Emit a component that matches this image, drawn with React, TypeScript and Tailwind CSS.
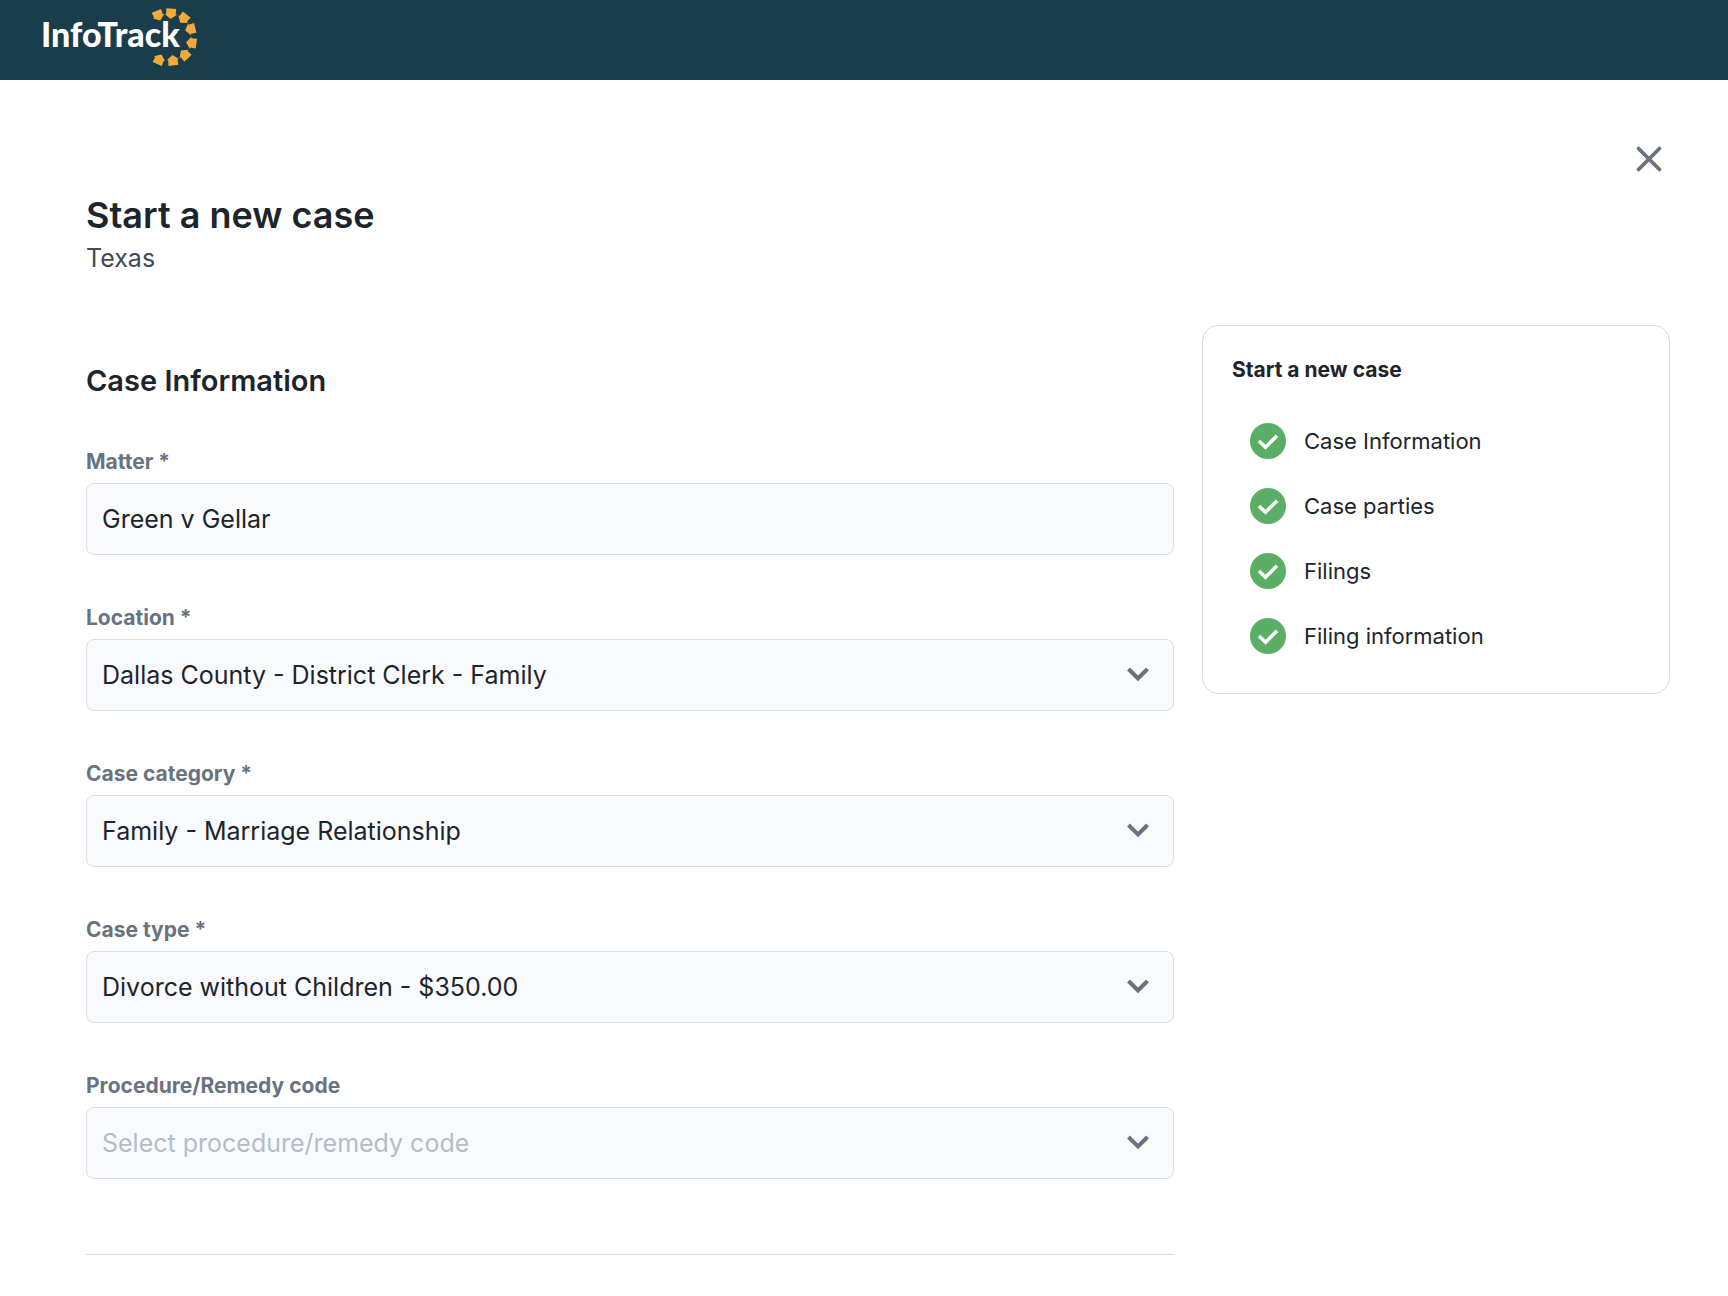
import React from 'react';

interface SelectFieldProps {
  id: string;
  label: string;
  value?: string;
  placeholder?: string;
}

const controlClass =
  'block h-[72px] w-full appearance-none rounded-lg border border-[#d9dde4] bg-[#f9fafc] px-[15px] text-[25px]';

// Position and rotation of each arrow in the logo ring
const ringArrows = [
  { x: 158, y: 15, angle: -22 },
  { x: 171, y: 13, angle: 4 },
  { x: 184, y: 18, angle: 38 },
  { x: 191, y: 29, angle: 76 },
  { x: 192, y: 43, angle: 98 },
  { x: 185, y: 55, angle: 137 },
  { x: 173, y: 61, angle: 174 },
  { x: 159, y: 60, angle: 204 },
];

const Logo: React.FC = () => (
  <svg width="200" height="80" viewBox="0 0 200 80" role="img" aria-label="InfoTrack">
    {ringArrows.map((arrow) => (
      <path
        key={arrow.x}
        d="M-5 -4.4 L5 -4.4 L4.7 1.2 L6.2 1.4 L0 6 L-6.2 1.4 L-4.7 1.2 Z"
        fill="#f2a93b"
        transform={`translate(${arrow.x} ${arrow.y}) rotate(${arrow.angle})`}
      />
    ))}
    <text x="41" y="47" fill="#fff" className="font-['Lato'] text-[34px] font-black">
      InfoTrack
    </text>
  </svg>
);

const FieldLabel: React.FC<{ htmlFor: string; children: React.ReactNode }> = ({ htmlFor, children }) => (
  <label htmlFor={htmlFor} className="mb-[7px] block text-[21px] leading-7 font-bold text-[#68737f]">
    {children}
  </label>
);

const SelectField: React.FC<SelectFieldProps> = ({ id, label, value, placeholder }) => (
  <div>
    <FieldLabel htmlFor={id}>{label}</FieldLabel>
    <div className="relative">
      <select id={id} className={`${controlClass} pt-0.5 ${value ? 'text-[#1d242c]' : 'text-[#b4bdc7]'}`}>
        <option>{value || placeholder}</option>
      </select>
      <svg
        className="pointer-events-none absolute top-[27px] right-6 h-4 w-6"
        viewBox="0 0 24 16"
        fill="none"
        stroke="#68737f"
        strokeWidth="4"
      >
        <path d="M2.5 3 12 12.5 21.5 3" />
      </svg>
    </div>
  </div>
);

const CheckBadge: React.FC = () => (
  <svg className="size-9 shrink-0" viewBox="0 0 36 36" fill="none">
    <circle cx="18" cy="18" r="18" fill="#5aae66" />
    <path d="M9 18 15.5 24.2 27 12.8" stroke="#fff" strokeWidth="3.6" />
  </svg>
);

const steps = ['Case Information', 'Case parties', 'Filings', 'Filing information'];

const App: React.FC = () => {
  return (
    <div className="min-h-screen bg-white font-['Inter',sans-serif] text-[#1d242c]">
      <header className="h-20 bg-[#193d4b]">
        <Logo />
      </header>

      <main className="pr-[58px] pl-[86px]">
        <div className="flex justify-end pt-[58px]">
          <button type="button" aria-label="Close" className="flex size-[42px] items-center justify-center">
            <svg
              className="size-7"
              viewBox="0 0 28 28"
              fill="none"
              stroke="#68737f"
              strokeWidth="3.8"
              strokeLinecap="round"
            >
              <path d="M3.5 3.5 24.5 24.5 M24.5 3.5 3.5 24.5" />
            </svg>
          </button>
        </div>

        <h1 className="mt-3 text-[36px] leading-[46px] font-semibold">Start a new case</h1>
        <p className="text-[25px] leading-10 text-[#414a55]">Texas</p>

        <div className="mt-[47px] flex items-start gap-7">
          <form className="min-w-0 flex-1">
            <h2 className="mt-9 mb-[47px] text-[29px] leading-10 font-semibold">Case Information</h2>

            <div className="flex flex-col gap-[49px]">
              <div>
                <FieldLabel htmlFor="matter">Matter *</FieldLabel>
                <input id="matter" type="text" defaultValue="Green v Gellar" className={controlClass} />
              </div>
              <SelectField id="location" label="Location *" value="Dallas County - District Clerk - Family" />
              <SelectField id="category" label="Case category *" value="Family - Marriage Relationship" />
              <SelectField id="type" label="Case type *" value="Divorce without Children - $350.00" />
              <SelectField id="procedure" label="Procedure/Remedy code" placeholder="Select procedure/remedy code" />
            </div>

            <hr className="mt-[75px] border-[#d9dde4]" />
          </form>

          {/* Progress */}
          <aside className="w-[468px] shrink-0 rounded-2xl border border-[#dcdde1] px-[29px] pt-7 pb-[39px]">
            <h3 className="text-[21px] leading-8 font-bold">Start a new case</h3>
            <ul className="mt-[37px] flex flex-col gap-[29px] pl-[18px]">
              {steps.map((step) => (
                <li key={step} className="flex items-center gap-[18px] text-[22px] leading-9">
                  <CheckBadge />
                  {step}
                </li>
              ))}
            </ul>
          </aside>
        </div>
      </main>
    </div>
  );
};

export default App;
